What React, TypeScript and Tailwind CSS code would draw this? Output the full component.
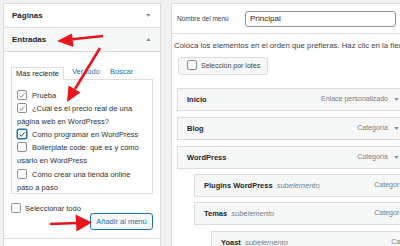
import React from "react";

// Casilla de verificación al estilo del admin de WordPress
function Box({ checked = false, focus = false }: { checked?: boolean; focus?: boolean }) {
  return (
    <span
      className={
        focus
          ? "relative top-[-1px] mr-[5px] inline-flex h-[10px] w-[10px] items-center justify-center rounded-[2px] border border-[#2271b1] bg-white align-middle shadow-[0_0_0_0.5px_#2271b1]"
          : "relative top-[-1px] mr-[5px] inline-flex h-[10px] w-[10px] items-center justify-center rounded-[2px] border border-[#8c8f94] bg-white align-middle"
      }
    >
      {checked && (
        <svg viewBox="0 0 10 10" className="h-[9px] w-[9px]">
          <path
            d="M1.8 5.1 4 7.3 8.4 2.4"
            fill="none"
            stroke={focus ? "#1d2327" : "#787c82"}
            strokeWidth="1.2"
          />
        </svg>
      )}
    </span>
  );
}

function Caret() {
  return (
    <svg viewBox="0 0 6 4" className="h-[3px] w-[5px] shrink-0">
      <polygon points="0,0 6,0 3,4" fill="#8c8f94" />
    </svg>
  );
}

interface MenuItem {
  title: string;
  type: string;
  sub?: boolean;
  indent: string;
  gap: string;
}

const items: MenuItem[] = [
  { title: "Inicio", type: "Enlace personalizado", indent: "ml-[5px]", gap: "mt-[13px]" },
  { title: "Blog", type: "Categoría", indent: "ml-[5px]", gap: "mt-[6px]" },
  { title: "WordPress", type: "Categoría", indent: "ml-[5px]", gap: "mt-[6px]" },
  { title: "Plugins WordPress", type: "Categoría", sub: true, indent: "ml-[22px]", gap: "mt-[5px]" },
  { title: "Temas", type: "Categoría", sub: true, indent: "ml-[22px]", gap: "mt-[5px]" },
  { title: "Yoast", type: "Categoría", sub: true, indent: "ml-[39px]", gap: "mt-[6px]" },
];

export default function App() {
  return (
    <div className="relative flex h-[246px] w-[400px] gap-[10px] overflow-hidden bg-[#f0f0f1] pl-[3px] pt-[3px] font-['Liberation_Sans',Arial,sans-serif] text-[#1d2327]">
      {/* Panel izquierdo */}
      <div className="h-[260px] w-[158px] shrink-0 border border-[#dcdcde] bg-white">
        <div className="flex h-[24px] items-center justify-between border-b border-[#dcdcde] pl-[8px] pr-[9px]">
          <span className="text-[8px] font-bold">Páginas</span>
          <Caret />
        </div>
        <div className="flex h-[24px] items-center justify-between border-b border-[#dcdcde] bg-[#f6f7f7] pl-[8px] pr-[9px]">
          <span className="text-[8px] font-bold">Entradas</span>
          <svg viewBox="0 0 6 4" className="h-[3px] w-[5px]">
            <polygon points="0,4 6,4 3,0" fill="#8c8f94" />
          </svg>
        </div>

        <div className="mt-[14px] flex items-end pl-[7px] text-[7.5px] leading-[12px]">
          <div className="relative z-10 -mb-px flex h-[13px] items-center border border-b-0 border-[#dcdcde] bg-white px-[4px]">
            Más reciente
          </div>
          <span className="ml-[8px] pb-[1px] text-[#2271b1]">Ver todo</span>
          <span className="ml-[10px] pb-[1px] text-[#2271b1]">Buscar</span>
        </div>
        <div className="mx-[7px] h-[115px] overflow-hidden border border-[#dcdcde] pl-[5px] pt-[9px] text-[7.5px] leading-[13px] text-[#2c3338]">
          <div>
            <Box checked />
            Prueba
          </div>
          <div>
            <Box checked />
            ¿Cuál es el precio real de una
            <br />
            página web en WordPress?
          </div>
          <div>
            <Box checked focus />
            Como programar en WordPress
          </div>
          <div>
            <Box />
            Boilerplate code: qué es y cómo
            <br />
            usarlo en WordPress
          </div>
          <div className="mt-[1px]">
            <Box />
            Cómo crear una tienda online
            <br />
            paso a paso
          </div>
        </div>

        <div className="flex items-start justify-between px-[7px]">
          <div className="mt-[8px] flex h-[13px] items-center text-[7.5px] text-[#2c3338]">
            <Box />
            <span className="-ml-[1px]">Seleccionar todo</span>
          </div>
          <button className="mt-[19px] flex h-[17px] w-[63px] items-center justify-center rounded-[3px] border border-[#2271b1] bg-[#f6f7f7] text-[7.5px] text-[#2271b1]">
            Añadir al menú
          </button>
        </div>
        <div className="mt-[8px] h-[20px] border-t border-[#dcdcde]" />
      </div>

      {/* Panel derecho: estructura del menú */}
      <div className="h-[260px] w-[260px] shrink-0 border border-[#dcdcde] bg-white">
        <div className="flex h-[30px] items-center border-b border-[#dcdcde] pl-[5px]">
          <span className="w-[68px] text-[6.5px] text-[#3c434a]">Nombre del menú</span>
          <div className="flex h-[16px] w-[151px] items-center rounded-[3px] border border-[#8c8f94] pl-[4px] text-[8px]">
            Principal
          </div>
        </div>
        <div className="pl-[2px] pt-[6px] text-[7.8px] leading-[12px] whitespace-nowrap text-[#3c434a]">
          Coloca los elementos en el orden que prefieras. Haz clic en la flecha
        </div>
        <div className="ml-[6px] mt-[5px] flex h-[18px] w-[90px] items-center rounded-[3px] border border-[#dcdcde] bg-[#f6f7f7] pl-[8px] text-[7px] text-[#3c434a]">
          <Box />
          <span className="-ml-[1px]">Selección por lotes</span>
        </div>

        {items.map((item) => (
          <div
            key={item.title}
            className={`${item.indent} ${item.gap} flex h-[23px] w-[235px] items-center justify-between border border-[#dcdcde] bg-[#f6f7f7] pl-[9px] pr-[12px]`}
          >
            <span className="whitespace-nowrap text-[7.5px]">
              <span className="font-bold">{item.title}</span>
              {item.sub && <span className="ml-[4px] italic text-[#787c82]">subelemento</span>}
            </span>
            <span className="flex items-center gap-[6px] text-[7px] text-[#787c82]">
              {item.type}
              <Caret />
            </span>
          </div>
        ))}
      </div>

      {/* Flechas rojas de anotación */}
      <svg
        className="pointer-events-none absolute left-0 top-0"
        width="400"
        height="246"
        viewBox="0 0 400 246"
      >
        <g fill="#e8161c" stroke="none">
          <line x1="103" y1="36" x2="70" y2="39.5" stroke="#e8161c" strokeWidth="2.6" />
          <polygon points="57,41 72,33.5 73.5,47" />
          <line x1="100" y1="48" x2="75" y2="89" stroke="#e8161c" strokeWidth="2.6" />
          <polygon points="67,102 68.5,85.5 80.5,92.5" />
          <line x1="50" y1="224" x2="77" y2="223" stroke="#e8161c" strokeWidth="2.6" />
          <polygon points="92,222.5 75.5,214.5 76.5,231.5" />
        </g>
      </svg>
    </div>
  );
}
